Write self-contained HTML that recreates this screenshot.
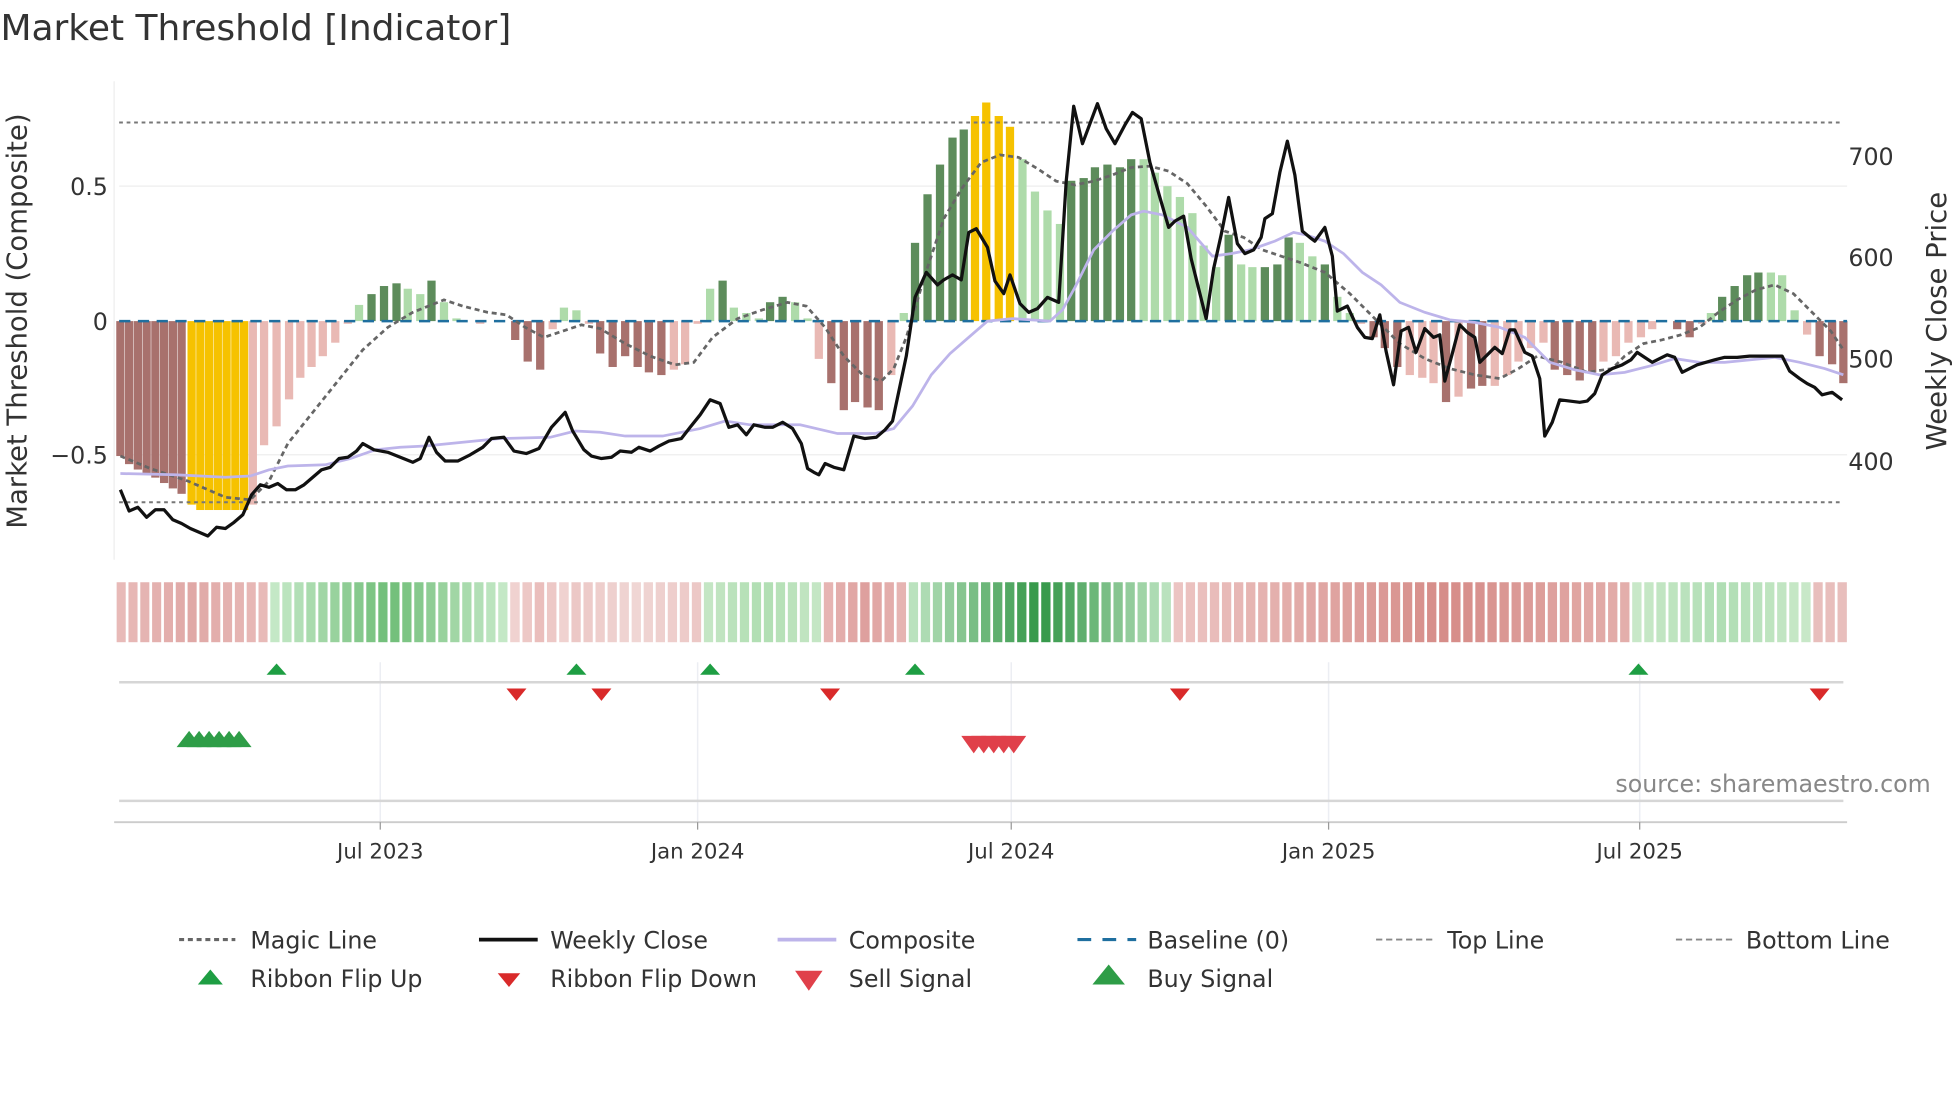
<!DOCTYPE html>
<html><head><meta charset="utf-8"><style>
html,body{margin:0;padding:0;background:#fff;}
svg{display:block;}
text{font-family:"DejaVu Sans","Liberation Sans",sans-serif;fill:#333;}
</style></head><body>
<svg id="s" width="1960" height="1102" viewBox="0 0 1568 882" xmlns="http://www.w3.org/2000/svg">
<rect width="1568" height="882" fill="#fff"/>
<text x="0" y="32" font-size="28.8">Market Threshold [Indicator]</text>
<line x1="91" y1="65" x2="91" y2="448" stroke="#eee"/>
<line x1="95" y1="149" x2="1478" y2="149" stroke="#eee"/>
<line x1="95" y1="364" x2="1478" y2="364" stroke="#eee"/>
<g id="bars"></g>
<line x1="95" y1="98" x2="1475" y2="98" stroke="#777" stroke-width="1.6" stroke-dasharray="3,3"/>
<line x1="95" y1="402" x2="1475" y2="402" stroke="#777" stroke-width="1.6" stroke-dasharray="3,3"/>
<line x1="95" y1="257" x2="1478" y2="257" stroke="#1f6f9f" stroke-width="2" stroke-dasharray="9,6"/>
<polyline id="magic" fill="none" stroke="#666" stroke-width="2.2" stroke-dasharray="4,3"/>
<polyline id="comp" fill="none" stroke="#bdb4ea" stroke-width="2.2"/>
<polyline id="close" fill="none" stroke="#111" stroke-width="2.6" stroke-linejoin="round"/>
<text x="86" y="156" font-size="19" text-anchor="end">0.5</text>
<text x="86" y="264" font-size="19" text-anchor="end">0</text>
<text x="86" y="371" font-size="19" text-anchor="end">−0.5</text>
<text x="1479" y="132" font-size="19">700</text>
<text x="1479" y="213" font-size="19">600</text>
<text x="1479" y="294" font-size="19">500</text>
<text x="1479" y="376" font-size="19">400</text>
<text transform="translate(21,257) rotate(-90)" font-size="22" text-anchor="middle">Market Threshold (Composite)</text>
<text transform="translate(1557,257) rotate(-90)" font-size="22" text-anchor="middle">Weekly Close Price</text>
<g id="strip"></g>
<g stroke="#eceef3" stroke-width="1.2">
<line x1="304" y1="530" x2="304" y2="658"/><line x1="558" y1="530" x2="558" y2="658"/><line x1="809" y1="530" x2="809" y2="658"/><line x1="1063" y1="530" x2="1063" y2="658"/><line x1="1312" y1="530" x2="1312" y2="658"/>
</g>
<line x1="95" y1="546" x2="1475" y2="546" stroke="#d6d6d6" stroke-width="2"/>
<line x1="95" y1="641" x2="1475" y2="641" stroke="#d6d6d6" stroke-width="2"/>
<line x1="91" y1="658" x2="1478" y2="658" stroke="#ccc" stroke-width="1.5"/>
<g id="marks"></g>
<text x="1545" y="634" font-size="19" text-anchor="end" style="fill:#888">source: sharemaestro.com</text>
<g font-size="17" text-anchor="middle">
<line x1="304" y1="658" x2="304" y2="664" stroke="#999"/><text x="304" y="687">Jul 2023</text>
<line x1="558" y1="658" x2="558" y2="664" stroke="#999"/><text x="558" y="687">Jan 2024</text>
<line x1="809" y1="658" x2="809" y2="664" stroke="#999"/><text x="809" y="687">Jul 2024</text>
<line x1="1063" y1="658" x2="1063" y2="664" stroke="#999"/><text x="1063" y="687">Jan 2025</text>
<line x1="1312" y1="658" x2="1312" y2="664" stroke="#999"/><text x="1312" y="687">Jul 2025</text>
</g>
<g font-size="19">
<line x1="143" y1="752" x2="188" y2="752" stroke="#666" stroke-width="2.5" stroke-dasharray="4,3"/><text x="200" y="759">Magic Line</text>
<line x1="383" y1="752" x2="430" y2="752" stroke="#111" stroke-width="3"/><text x="440" y="759">Weekly Close</text>
<line x1="622" y1="752" x2="669" y2="752" stroke="#bdb4ea" stroke-width="3"/><text x="679" y="759">Composite</text>
<line x1="862" y1="752" x2="909" y2="752" stroke="#1f6f9f" stroke-width="2.5" stroke-dasharray="11,9"/><text x="918" y="759">Baseline (0)</text>
<line x1="1101" y1="752" x2="1148" y2="752" stroke="#888" stroke-width="1.5" stroke-dasharray="5,3"/><text x="1158" y="759">Top Line</text>
<line x1="1341" y1="752" x2="1388" y2="752" stroke="#888" stroke-width="1.5" stroke-dasharray="5,3"/><text x="1397" y="759">Bottom Line</text>
<polygon points="158,788 168,776 178,788" fill="#1e9e43"/><text x="200" y="790">Ribbon Flip Up</text>
<polygon points="398,779 416,779 407,790" fill="#d92a2a"/><text x="440" y="790">Ribbon Flip Down</text>
<polygon points="636,777 658,777 647,793" fill="#e0404a"/><text x="679" y="790">Sell Signal</text>
<polygon points="874,788 887,772 900,788" fill="#2e9d47"/><text x="918" y="790">Buy Signal</text>
</g>
</svg>
<script>
var NS="http://www.w3.org/2000/svg";
function el(p,t,a){var e=document.createElementNS(NS,t);for(var k in a)e.setAttribute(k,a[k]);p.appendChild(e);return e;}
var C={R:"#a8716d",P:"#e9b9b4",Y:"#f6c200",G:"#5d8c5b",L:"#aedbaa"};
var B=[[96,-.5,'R'],[103,-.53,'R'],[110,-.55,'R'],[117,-.57,'R'],[124,-.58,'R'],[131,-.6,'R'],[138,-.62,'R'],[145,-.64,'R'],
[153,-.68,'Y'],[160,-.7,'Y'],[167,-.7,'Y'],[174,-.7,'Y'],[181,-.7,'Y'],[188,-.7,'Y'],[195,-.7,'Y'],
[202,-.68,'P'],[211,-.46,'P'],[221,-.39,'P'],[231,-.29,'P'],[240,-.21,'P'],[249,-.17,'P'],[258,-.13,'P'],[268,-.08,'P'],[278,-.01,'P'],
[287,.06,'L'],[297,.1,'G'],[307,.13,'G'],[317,.14,'G'],[326,.12,'L'],[336,.1,'L'],[345,.15,'G'],[355,.07,'L'],[365,.01,'L'],[384,-.01,'P'],
[412,-.07,'R'],[422,-.15,'R'],[432,-.18,'R'],[442,-.03,'P'],[451,.05,'L'],[461,.04,'L'],[471,-.01,'P'],[480,-.12,'R'],[490,-.17,'R'],[500,-.13,'R'],[510,-.17,'R'],[519,-.19,'R'],[529,-.2,'R'],[539,-.18,'P'],[548,-.16,'P'],[558,-.01,'P'],
[568,.12,'L'],[578,.15,'G'],[587,.05,'L'],[597,.03,'L'],[607,.01,'L'],[616,.07,'G'],[626,.09,'G'],[636,.07,'L'],[646,.01,'L'],
[655,-.14,'P'],[665,-.23,'R'],[675,-.33,'R'],[684,-.3,'R'],[694,-.32,'R'],[703,-.33,'R'],[713,-.2,'P'],[723,.03,'L'],
[732,.29,'G'],[742,.47,'G'],[752,.58,'G'],[762,.68,'G'],[771,.71,'G'],[780,.76,'Y'],[789,.81,'Y'],[799,.76,'Y'],[808,.72,'Y'],
[818,.6,'L'],[828,.48,'L'],[838,.41,'L'],[848,.36,'L'],[857,.52,'G'],[867,.53,'G'],[876,.57,'G'],[886,.58,'G'],[896,.57,'G'],[905,.6,'G'],[915,.6,'L'],[924,.55,'L'],[934,.5,'L'],[944,.46,'L'],[954,.4,'L'],[963,.28,'L'],[973,.2,'L'],[983,.32,'G'],[993,.21,'L'],[1002,.2,'L'],[1012,.2,'G'],[1022,.21,'G'],[1031,.31,'G'],[1040,.29,'L'],[1050,.24,'L'],[1060,.21,'G'],[1070,.09,'L'],[1080,.03,'L'],
[1089,-.01,'P'],[1099,-.06,'R'],[1108,-.1,'R'],[1118,-.17,'R'],[1128,-.2,'P'],[1138,-.21,'P'],[1147,-.23,'P'],[1157,-.3,'R'],[1167,-.28,'P'],[1177,-.25,'R'],[1186,-.24,'R'],[1196,-.24,'P'],[1206,-.2,'P'],[1215,-.15,'P'],[1225,-.1,'P'],[1235,-.08,'P'],[1244,-.18,'R'],[1254,-.2,'R'],[1264,-.22,'R'],[1274,-.19,'R'],[1283,-.15,'P'],[1293,-.13,'P'],[1303,-.08,'P'],[1313,-.06,'P'],[1322,-.03,'P'],[1342,-.03,'R'],[1352,-.06,'R'],[1362,-.01,'P'],
[1369,.03,'L'],[1378,.09,'G'],[1388,.13,'G'],[1398,.17,'G'],[1407,.18,'G'],[1417,.18,'L'],[1426,.17,'L'],[1436,.04,'L'],
[1446,-.05,'P'],[1456,-.13,'R'],[1466,-.16,'R'],[1475,-.23,'R']];
var g=document.getElementById('bars');
B.forEach(function(b){var h=b[1]*216;var y=h>0?257-h:257;el(g,'rect',{x:b[0]-3.3,y:y,width:6.6,height:Math.abs(h),fill:C[b[2]]});});
function pts(id,s){document.getElementById(id).setAttribute('points',s);}
pts('close',"96,392 103,409 110,406 117,414 124,408 131,408 138,416 145,419 152,423 159,426 166,429 173,422 180,423 187,418 194,412 201,396 208,388 215,390 222,387 229,392 236,392 243,388 250,382 257,376 264,374 271,367 278,366 285,361 290,355 299,360 310,362 320,366 330,370 336,367 343,350 349,362 356,369 366,369 376,364 386,358 393,351 403,350 411,361 421,363 431,359 441,342 452,330 458,345 467,360 473,365 481,367 489,366 496,361 505,362 511,358 520,361 527,357 535,353 545,351 552,342 560,332 568,320 576,323 583,342 590,340 597,348 603,340 612,342 618,342 626,338 634,343 641,355 646,375 651,378 655,380 660,371 667,374 675,376 683,349 692,351 701,350 708,344 714,337 725,285 732,238 741,218 750,228 755,224 762,220 769,224 775,186 781,183 790,198 796,225 803,235 808,220 816,243 823,250 830,247 838,238 847,242 853,145 859,85 866,115 872,99 878,83 885,103 892,115 900,100 906,90 913,95 920,130 928,158 935,182 940,177 947,173 953,207 960,235 965,255 971,215 977,188 983,158 990,195 996,203 1003,200 1009,190 1012,175 1018,171 1024,138 1030,113 1036,140 1042,185 1048,190 1052,193 1060,182 1066,205 1070,249 1078,245 1086,262 1092,270 1098,271 1104,252 1109,281 1115,308 1121,265 1127,262 1133,282 1140,263 1147,270 1152,268 1156,305 1162,283 1168,260 1174,266 1180,270 1184,290 1190,284 1196,278 1202,283 1208,264 1212,264 1220,282 1226,285 1232,303 1236,349 1242,338 1248,320 1256,321 1264,322 1270,321 1276,315 1282,300 1290,295 1298,292 1305,288 1310,282 1316,286 1322,290 1328,287 1334,284 1340,286 1346,298 1352,295 1358,292 1365,290 1372,288 1380,286 1390,286 1400,285 1410,285 1420,285 1426,285 1432,297 1440,303 1446,307 1452,310 1458,316 1466,314 1474,320");
pts('comp',"96,379 140,380 180,382 200,381 215,376 230,373 260,372 280,367 300,360 320,358 340,357 400,351 440,350 460,345 480,346 500,349 530,349 560,343 580,337 600,340 640,340 670,347 700,347 715,343 730,325 745,300 760,283 775,270 790,257 810,255 840,257 850,248 860,230 875,200 890,185 905,172 915,169 930,172 950,182 970,205 985,203 1000,200 1020,193 1035,186 1045,188 1060,193 1075,203 1090,218 1105,228 1120,242 1140,250 1160,256 1180,258 1200,262 1220,270 1240,290 1260,296 1280,300 1300,298 1320,293 1340,287 1360,290 1380,290 1400,288 1420,286 1440,290 1460,295 1475,300");
pts('magic',"96,365 120,375 150,385 180,398 200,400 215,385 230,355 250,330 270,305 290,280 310,262 330,250 355,240 370,245 390,250 405,252 420,262 435,270 450,265 465,260 480,263 500,275 520,285 540,292 555,290 570,270 590,255 610,248 630,242 645,245 660,262 675,285 690,300 705,305 715,295 725,270 740,220 755,175 770,150 785,130 800,124 815,126 830,135 845,145 860,148 875,145 890,140 905,134 920,133 935,137 950,147 965,165 980,185 995,190 1010,200 1025,205 1040,210 1060,218 1080,235 1100,255 1120,275 1140,287 1160,295 1180,300 1200,303 1215,295 1230,285 1250,290 1270,298 1290,295 1300,285 1315,275 1330,272 1345,268 1360,262 1375,250 1390,240 1405,232 1420,228 1435,235 1450,250 1465,265 1475,280");
var segs=[[93,216,[232,186,184],[224,168,166]],[216,408,[190,228,190],[110,190,120]],[408,457,[240,210,208],[234,190,188]],[457,563,[236,200,198],[240,214,212]],[563,659,[196,230,196],[176,222,178]],[659,727,[230,180,178],[222,160,158]],[727,939,[120,200,130],[196,232,196]],[939,1306,[236,196,194],[214,140,136]],[1306,1451,[200,232,200],[176,222,180]],[1451,1480,[232,190,188],[232,190,188]]];
var sg=document.getElementById('strip');
segs.forEach(function(s,si){var n=Math.max(1,Math.round((s[1]-s[0])/9.7));var w=(s[1]-s[0])/n;for(var i=0;i<n;i++){var t=n>1?i/(n-1):0;var m,c;if(si==1||si==6){m=1-Math.abs(t*2-1);var a=si==1?[196,232,198]:[186,226,190];var b=si==1?[112,190,120]:[50,150,70];c=a.map(function(v,k){return Math.round(v+(b[k]-v)*m);});}else if(si==7){m=t<0.6?t/0.6:1-(t-0.6)/0.4*0.6;c=s[2].map(function(v,k){return Math.round(v+(s[3][k]-v)*m);});}else{c=s[2].map(function(v,k){return Math.round(v+(s[3][k]-v)*(1-Math.abs(t*2-1)));});}
el(sg,'rect',{x:s[0]+i*w,y:466,width:w-2.2,height:48,fill:'rgb('+c.join(',')+')'});}});
var mk=document.getElementById('marks');
[221,461,568,732,1311].forEach(function(x){el(mk,'polygon',{points:(x-8)+',540 '+x+',531 '+(x+8)+',540',fill:'#1e9e43'});});
[413,481,664,944,1456].forEach(function(x){el(mk,'polygon',{points:(x-8)+',551 '+(x+8)+',551 '+x+',561',fill:'#d92a2a'});});
[151,159,167,175,183,191].forEach(function(x){el(mk,'polygon',{points:(x-10)+',598 '+x+',585 '+(x+10)+',598',fill:'#2e9d47'});});
[779,787,795,803,811].forEach(function(x){el(mk,'polygon',{points:(x-10)+',589 '+(x+10)+',589 '+x+',603',fill:'#e0404a'});});
</script>
</body></html>
